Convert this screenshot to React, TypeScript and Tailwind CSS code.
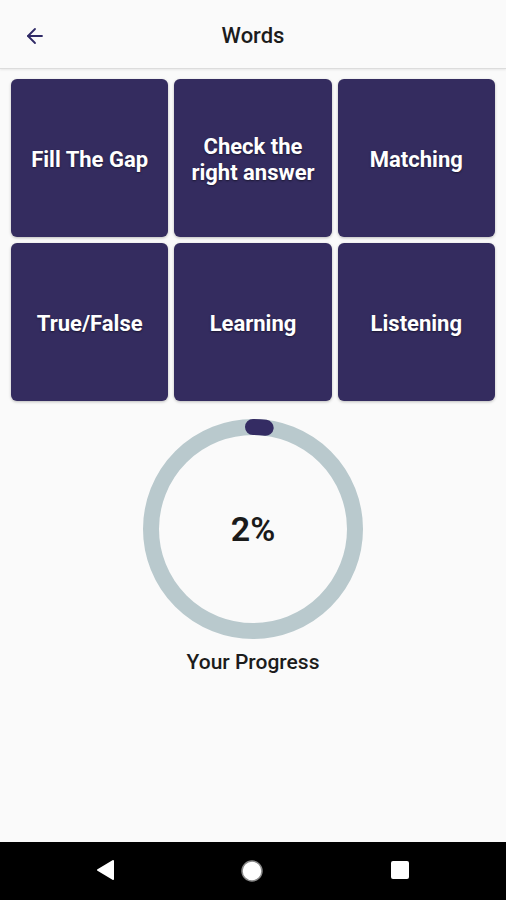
import { ArrowLeft } from "lucide-react";

const TILES = ["Fill The Gap", "Check the right answer", "Matching", "True/False", "Learning", "Listening"];

function ProgressRing({ value }: { value: number }) {
  const r = 102;
  const c = 2 * Math.PI * r;
  return (
    <svg width="222" height="222" viewBox="0 0 222 222">
      <circle cx="111" cy="111" r={r} fill="none" stroke="#b9c9cd" strokeWidth="16" />
      <circle
        cx="111"
        cy="111"
        r={r}
        fill="none"
        stroke="#342c63"
        strokeWidth="16"
        strokeLinecap="round"
        strokeDasharray={`${(c * value) / 100} ${c}`}
        transform="rotate(-90 111 111)"
      />
    </svg>
  );
}

export default function App() {
  return (
    <div className="h-[900px] w-[506px] flex flex-col bg-[#fafafa] font-['Roboto',sans-serif]">
      <header className="h-[69px] shrink-0 flex items-center relative bg-[#fafafa] border-b border-[#dcdcdc] shadow-[0_1px_2px_rgba(0,0,0,0.08)]">
        <ArrowLeft className="absolute left-[23px] top-[24px] text-[#2f2a66]" size={24} strokeWidth={1.8} />
        <h1 className="w-full text-center pt-[3px] text-[22px] text-[#1c1c1c] font-medium">Words</h1>
      </header>

      <main className="flex-1 flex flex-col">
        <div className="grid grid-cols-3 gap-[6px] px-[11px] pt-[10px]">
          {TILES.map((t) => (
            <div
              key={t}
              className="h-[158px] rounded-[6px] bg-[#342c5f] flex items-center justify-center px-2 pt-[3px] text-center shadow-[0_1px_3px_rgba(0,0,0,0.25)]"
            >
              <span className="text-white font-bold text-[22px] leading-[26px] [text-shadow:0_1px_2px_rgba(0,0,0,0.5)]">{t}</span>
            </div>
          ))}
        </div>

        <div className="flex flex-col items-center mt-[17px]">
          <div className="relative w-[222px] h-[222px]">
            <ProgressRing value={2} />
            <div className="absolute inset-0 flex items-center justify-center">
              <span className="text-[34px] font-semibold text-[#1a1a1a]">2%</span>
            </div>
          </div>
          <p className="mt-[7px] text-[21px] font-medium text-[#1c1c1c]">Your Progress</p>
        </div>
      </main>

      <nav className="h-[58px] shrink-0 bg-black flex items-center justify-around px-[60px]">
        <div className="flex w-full justify-between px-[35px]">
          <svg width="20" height="22" viewBox="0 0 20 22">
            <path d="M18 2 L3 11 L18 20 Z" fill="white" stroke="white" strokeWidth="2" strokeLinejoin="round" />
          </svg>
          <svg width="24" height="24" viewBox="0 0 24 24">
            <circle cx="12" cy="12" r="10" fill="white" stroke="#888" strokeWidth="1.5" />
            <circle cx="12" cy="12" r="8.5" fill="white" />
          </svg>
          <svg width="22" height="22" viewBox="0 0 22 22">
            <rect x="2" y="2" width="18" height="18" rx="2" fill="white" />
          </svg>
        </div>
      </nav>
    </div>
  );
}
